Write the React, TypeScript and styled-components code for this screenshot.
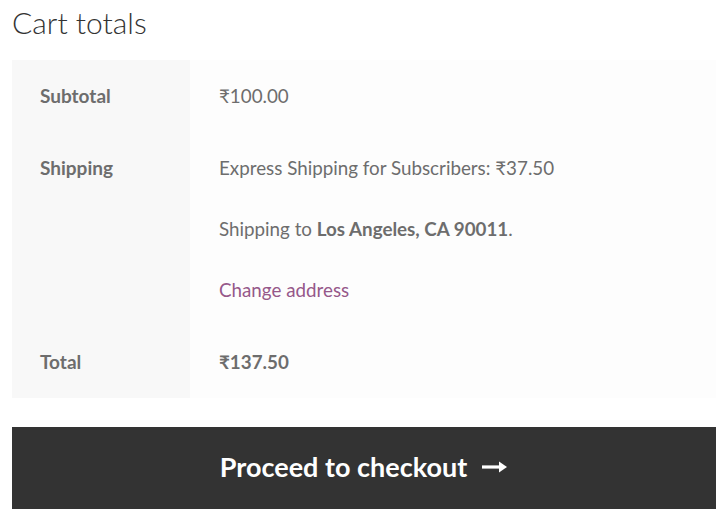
import React from "react";
import styled, { createGlobalStyle } from "styled-components";

const Global = createGlobalStyle`
  html, body { margin: 0; padding: 0; background: #ffffff; }
  body { font-family: Lato, "Noto Sans", sans-serif; color: #6d6d6d; }
`;

const Page = styled.div`
  padding: 0 12px;
`;

const Heading = styled.h2`
  margin: 0;
  padding-top: 3px;
  height: 57px;
  font-size: 30px;
  font-weight: 300;
  line-height: 38px;
  color: #333333;
`;

const Table = styled.table`
  width: 100%;
  border-collapse: collapse;
  border-spacing: 0;
`;

const Label = styled.th`
  width: 178px;
  box-sizing: border-box;
  background: #f8f8f8;
  padding: 22px 28px;
  text-align: left;
  vertical-align: top;
  font-size: 19px;
  line-height: 28px;
  font-weight: 700;
  color: #6d6d6d;
`;

const Value = styled.td`
  background: #fdfdfd;
  padding: 22px 29px;
  vertical-align: top;
  font-size: 18.8px;
  line-height: 28px;
  color: #6d6d6d;
`;

const Line = styled.p`
  margin: 0;
  & + & { margin-top: 33px; }
`;

const Strong = styled.strong`
  font-weight: 700;
`;

const Link = styled.a`
  color: #96588a;
  text-decoration: none;
`;

const Checkout = styled.a`
  margin-top: 29px;
  height: 82px;
  box-sizing: border-box;
  padding-bottom: 3px;
  background: #333333;
  color: #ffffff;
  display: flex;
  align-items: center;
  justify-content: center;
  gap: 15px;
  font-size: 27px;
  font-weight: 700;
  text-decoration: none;
`;

export default function App() {
  return (
    <Page>
      <Global />
      <Heading>Cart totals</Heading>
      <Table>
        <tbody>
          <tr>
            <Label>Subtotal</Label>
            <Value>₹100.00</Value>
          </tr>
          <tr>
            <Label>Shipping</Label>
            <Value>
              <Line>Express Shipping for Subscribers: ₹37.50</Line>
              <Line>
                Shipping to <Strong>Los Angeles, CA 90011</Strong>.
              </Line>
              <Line>
                <Link href="#">Change address</Link>
              </Line>
            </Value>
          </tr>
          <tr>
            <Label>Total</Label>
            <Value>
              <Strong>₹137.50</Strong>
            </Value>
          </tr>
        </tbody>
      </Table>
      <Checkout href="#">
        <span>Proceed to checkout</span>
        <svg width="26" height="14" viewBox="0 0 26 14">
          <path d="M0 7h19" stroke="#fff" strokeWidth="3.2" />
          <path d="M17 1.5L25 7L17 12.5Z" fill="#fff" />
        </svg>
      </Checkout>
    </Page>
  );
}
